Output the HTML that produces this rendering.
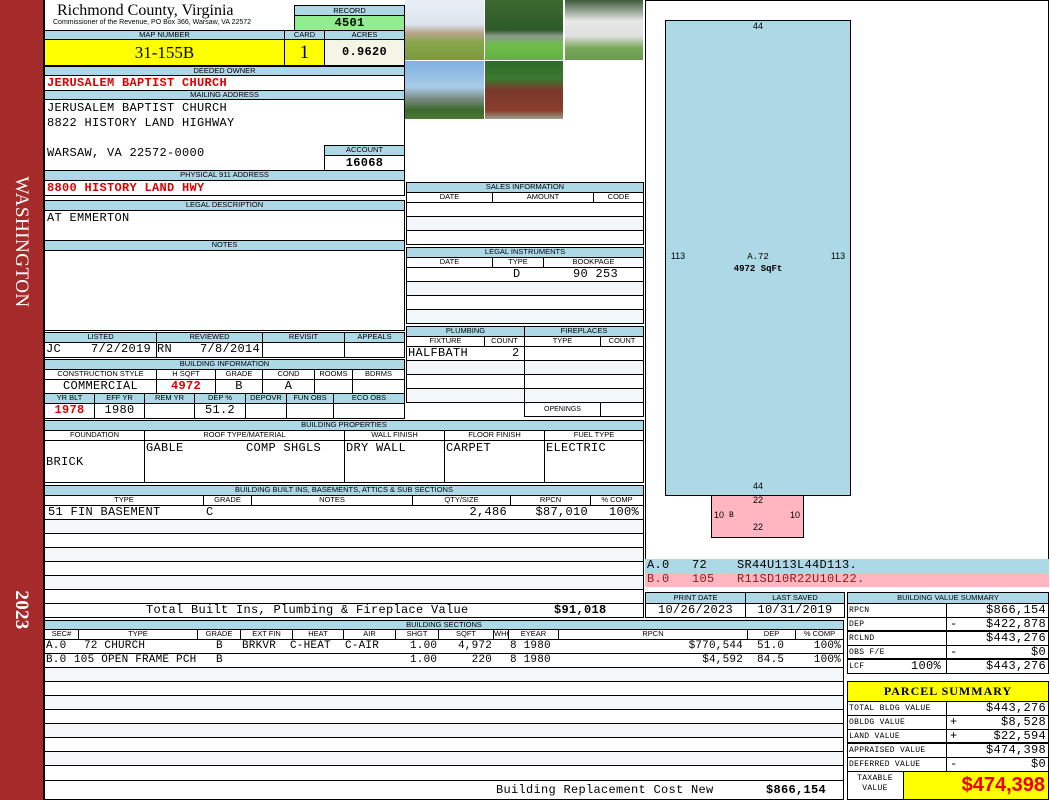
<!DOCTYPE html>
<html><head><meta charset="utf-8"><style>
*{box-sizing:border-box;margin:0;padding:0}
body{width:1050px;height:800px;position:relative;background:#fff;overflow:hidden;font-family:"Liberation Mono",monospace;font-size:12px;letter-spacing:0.3px;color:#000}
div{position:absolute}
.h{background:#add8e6;border:1px solid #000;font-family:"Liberation Sans",sans-serif;font-size:7.5px;letter-spacing:0;text-align:center;line-height:8px;white-space:nowrap;overflow:hidden}
.b{border:1px solid #000}
.t{white-space:pre;line-height:13px}
.r{color:#d00;font-weight:bold}
.c{text-align:center}
.rt{text-align:right}
.s{font-family:"Liberation Sans",sans-serif;font-size:7px;letter-spacing:0;line-height:9px;text-align:center;white-space:nowrap}
.bl{background:#add8e6}
.q{font-size:11px;letter-spacing:0.2px}
</style></head><body>
<div style="left:0;top:0;width:43px;height:800px;background:#a52a2a"></div>
<div style="left:21px;top:242px;width:0;height:0"><div style="left:-90px;top:-12px;width:180px;height:24px;transform:rotate(90deg);color:#fff;font-family:'Liberation Serif',serif;font-size:19px;text-align:center;line-height:24px;letter-spacing:0.5px">WASHINGTON</div></div>
<div style="left:21px;top:610px;width:0;height:0"><div style="left:-40px;top:-12px;width:80px;height:24px;transform:rotate(90deg);color:#fff;font-family:'Liberation Serif',serif;font-weight:bold;font-size:19px;text-align:center;line-height:24px">2023</div></div>
<div style="left:43px;top:0;width:2px;height:800px;background:#000"></div>

<div class="t" style="left:57px;top:2px;font-family:'Liberation Serif',serif;font-size:16px;letter-spacing:0;line-height:18px">Richmond County, Virginia</div>
<div class="t" style="left:53px;top:19px;font-family:'Liberation Sans',sans-serif;font-size:7px;letter-spacing:0;line-height:8px">Commissioner of the Revenue, PO Box 366, Warsaw, VA 22572</div>
<div class="h" style="left:294px;top:5px;width:111px;height:11px;line-height:9px">RECORD</div>
<div class="b c" style="left:294px;top:15px;width:111px;height:16px;background:#90ee90;font-weight:bold;line-height:14px">4501</div>
<div class="h" style="left:44px;top:30px;width:241px;height:10px">MAP NUMBER</div>
<div class="h" style="left:284px;top:30px;width:41px;height:10px">CARD</div>
<div class="h" style="left:324px;top:30px;width:81px;height:10px">ACRES</div>
<div class="b c" style="left:44px;top:39px;width:241px;height:27px;background:#ff0;font-family:'Liberation Serif',serif;font-size:17px;letter-spacing:0;line-height:25px">31-155B</div>
<div class="b c" style="left:284px;top:39px;width:41px;height:27px;background:#ff0;font-family:'Liberation Serif',serif;font-size:19px;line-height:25px">1</div>
<div class="b c" style="left:324px;top:39px;width:81px;height:27px;background:#f5f5e6;font-weight:bold;line-height:25px">0.9620</div>
<div class="h" style="left:44px;top:66px;width:361px;height:10px">DEEDED OWNER</div>
<div class="b t r" style="left:44px;top:75px;width:361px;height:16px;padding-left:2px;line-height:15px">JERUSALEM BAPTIST CHURCH</div>
<div class="h" style="left:44px;top:90px;width:361px;height:10px">MAILING ADDRESS</div>
<div class="b" style="left:44px;top:99px;width:361px;height:72px"></div>
<div class="t" style="left:47px;top:102px">JERUSALEM BAPTIST CHURCH</div>
<div class="t" style="left:47px;top:117px">8822 HISTORY LAND HIGHWAY</div>
<div class="t" style="left:47px;top:147px">WARSAW, VA 22572-0000</div>
<div class="h" style="left:324px;top:145px;width:81px;height:11px">ACCOUNT</div>
<div class="b c" style="left:324px;top:155px;width:81px;height:16px;font-weight:bold;line-height:14px">16068</div>
<div class="h" style="left:44px;top:170px;width:361px;height:11px">PHYSICAL 911 ADDRESS</div>
<div class="b t r" style="left:44px;top:180px;width:361px;height:16px;padding-left:2px;line-height:15px">8800 HISTORY LAND HWY</div>
<div class="h" style="left:44px;top:200px;width:361px;height:11px">LEGAL DESCRIPTION</div>
<div class="b" style="left:44px;top:210px;width:361px;height:31px"></div>
<div class="t" style="left:47px;top:212px">AT EMMERTON</div>
<div class="h" style="left:44px;top:240px;width:361px;height:11px">NOTES</div>
<div class="b" style="left:44px;top:250px;width:361px;height:81px"></div>

<div class="h" style="left:44px;top:332px;width:113px;height:11px">LISTED</div>
<div class="h" style="left:156px;top:332px;width:107px;height:11px">REVIEWED</div>
<div class="h" style="left:262px;top:332px;width:83px;height:11px">REVISIT</div>
<div class="h" style="left:344px;top:332px;width:61px;height:11px">APPEALS</div>
<div class="b" style="left:44px;top:342px;width:113px;height:16px"></div>
<div class="b" style="left:156px;top:342px;width:107px;height:16px"></div>
<div class="b" style="left:262px;top:342px;width:83px;height:16px"></div>
<div class="b" style="left:344px;top:342px;width:61px;height:16px"></div>
<div class="t" style="left:46px;top:343px">JC</div><div class="t" style="left:91px;top:343px">7/2/2019</div>
<div class="t" style="left:157px;top:343px">RN</div><div class="t" style="left:200px;top:343px">7/8/2014</div>

<div class="h" style="left:44px;top:359px;width:361px;height:11px">BUILDING INFORMATION</div>
<div class="h" style="left:44px;top:369px;width:113px;height:11px;background:#fff">CONSTRUCTION STYLE</div>
<div class="h" style="left:156px;top:369px;width:60px;height:11px;background:#fff">H SQFT</div>
<div class="h" style="left:215px;top:369px;width:48px;height:11px;background:#fff">GRADE</div>
<div class="h" style="left:262px;top:369px;width:53px;height:11px;background:#fff">COND</div>
<div class="h" style="left:314px;top:369px;width:39px;height:11px;background:#fff">ROOMS</div>
<div class="h" style="left:352px;top:369px;width:53px;height:11px;background:#fff">BDRMS</div>
<div class="b t c" style="left:44px;top:379px;width:113px;height:15px">COMMERCIAL</div>
<div class="b t c r" style="left:156px;top:379px;width:60px;height:15px">4972</div>
<div class="b t c" style="left:215px;top:379px;width:48px;height:15px">B</div>
<div class="b t c" style="left:262px;top:379px;width:53px;height:15px">A</div>
<div class="b" style="left:314px;top:379px;width:39px;height:15px"></div>
<div class="b" style="left:352px;top:379px;width:53px;height:15px"></div>
<div class="h" style="left:44px;top:393px;width:51px;height:11px">YR BLT</div>
<div class="h" style="left:94px;top:393px;width:51px;height:11px">EFF YR</div>
<div class="h" style="left:144px;top:393px;width:51px;height:11px">REM YR</div>
<div class="h" style="left:194px;top:393px;width:52px;height:11px">DEP %</div>
<div class="h" style="left:245px;top:393px;width:42px;height:11px">DEPOVR</div>
<div class="h" style="left:286px;top:393px;width:48px;height:11px">FUN OBS</div>
<div class="h" style="left:333px;top:393px;width:72px;height:11px">ECO OBS</div>
<div class="b t c r" style="left:44px;top:403px;width:51px;height:16px">1978</div>
<div class="b t c" style="left:94px;top:403px;width:51px;height:16px">1980</div>
<div class="b" style="left:144px;top:403px;width:51px;height:16px"></div>
<div class="b t c" style="left:194px;top:403px;width:52px;height:16px">51.2</div>
<div class="b" style="left:245px;top:403px;width:42px;height:16px"></div>
<div class="b" style="left:286px;top:403px;width:48px;height:16px"></div>
<div class="b" style="left:333px;top:403px;width:72px;height:16px"></div>

<div style="left:405px;top:0;width:79px;height:60px;background:linear-gradient(#e8eef4 0,#dde6ee 40%,#b9a48c 55%,#8aa64e 70%,#7a9a3e 100%)"></div>
<div style="left:485px;top:0;width:78px;height:60px;background:linear-gradient(#3c6a30 0,#2f5a2a 50%,#8a9a8c 60%,#6fbf4a 75%,#63b044 100%)"></div>
<div style="left:565px;top:0;width:78px;height:60px;background:linear-gradient(#3c5a38 0,#e8e8e8 35%,#e0e0e0 60%,#7aa85a 80%,#6a9a50 100%)"></div>
<div style="left:405px;top:61px;width:79px;height:58px;background:linear-gradient(#7fb0e0 0,#a8cbe8 45%,#7c8c84 65%,#3c6a2c 85%,#4a7a34 100%)"></div>
<div style="left:485px;top:61px;width:78px;height:58px;background:linear-gradient(#2e6a2a 0,#3a7a30 30%,#7a3a2c 50%,#8a3c2a 85%,#9aa090 100%)"></div>

<div class="h" style="left:406px;top:182px;width:238px;height:11px">SALES INFORMATION</div>
<div class="h" style="left:406px;top:192px;width:87px;height:11px;background:#fff">DATE</div>
<div class="h" style="left:492px;top:192px;width:102px;height:11px;background:#fff">AMOUNT</div>
<div class="h" style="left:593px;top:192px;width:51px;height:11px;background:#fff">CODE</div>
<div class="b" style="left:406px;top:202px;width:238px;height:15px"></div>
<div class="b" style="left:406px;top:216px;width:238px;height:15px;background:#f4f7fa"></div>
<div class="b" style="left:406px;top:230px;width:238px;height:15px"></div>
<div class="h" style="left:406px;top:247px;width:238px;height:11px">LEGAL INSTRUMENTS</div>
<div class="h" style="left:406px;top:257px;width:87px;height:11px;background:#fff">DATE</div>
<div class="h" style="left:492px;top:257px;width:52px;height:11px;background:#fff">TYPE</div>
<div class="h" style="left:543px;top:257px;width:101px;height:11px;background:#fff">BOOKPAGE</div>
<div class="b" style="left:406px;top:267px;width:238px;height:15px"></div>
<div class="t" style="left:513px;top:268px">D</div><div class="t" style="left:573px;top:268px">90 253</div>
<div class="b" style="left:406px;top:281px;width:238px;height:15px;background:#f4f7fa"></div>
<div class="b" style="left:406px;top:295px;width:238px;height:15px"></div>
<div class="b" style="left:406px;top:309px;width:238px;height:15px;background:#f4f7fa"></div>

<div class="h" style="left:406px;top:326px;width:119px;height:11px">PLUMBING</div>
<div class="h" style="left:524px;top:326px;width:120px;height:11px">FIREPLACES</div>
<div class="h" style="left:406px;top:336px;width:79px;height:11px;background:#fff">FIXTURE</div>
<div class="h" style="left:484px;top:336px;width:41px;height:11px;background:#fff">COUNT</div>
<div class="h" style="left:524px;top:336px;width:77px;height:11px;background:#fff">TYPE</div>
<div class="h" style="left:600px;top:336px;width:44px;height:11px;background:#fff">COUNT</div>
<div class="b" style="left:406px;top:346px;width:119px;height:15px"></div>
<div class="t" style="left:408px;top:347px">HALFBATH</div><div class="t" style="left:512px;top:347px">2</div>
<div class="b" style="left:406px;top:360px;width:119px;height:15px;background:#f4f7fa"></div>
<div class="b" style="left:406px;top:374px;width:119px;height:15px"></div>
<div class="b" style="left:406px;top:388px;width:119px;height:15px;background:#f4f7fa"></div>
<div class="b" style="left:524px;top:346px;width:120px;height:15px"></div>
<div class="b" style="left:524px;top:360px;width:120px;height:15px;background:#f4f7fa"></div>
<div class="b" style="left:524px;top:374px;width:120px;height:15px"></div>
<div class="b" style="left:524px;top:388px;width:120px;height:15px;background:#f4f7fa"></div>
<div class="b s" style="left:524px;top:402px;width:77px;height:15px;line-height:13px">OPENINGS</div>
<div class="b" style="left:600px;top:402px;width:44px;height:15px"></div>

<div class="h" style="left:44px;top:420px;width:600px;height:11px">BUILDING PROPERTIES</div>
<div class="h" style="left:44px;top:430px;width:101px;height:11px;background:#fff">FOUNDATION</div>
<div class="h" style="left:144px;top:430px;width:201px;height:11px;background:#fff">ROOF TYPE/MATERIAL</div>
<div class="h" style="left:344px;top:430px;width:101px;height:11px;background:#fff">WALL FINISH</div>
<div class="h" style="left:444px;top:430px;width:101px;height:11px;background:#fff">FLOOR FINISH</div>
<div class="h" style="left:544px;top:430px;width:100px;height:11px;background:#fff">FUEL TYPE</div>
<div class="b" style="left:44px;top:440px;width:101px;height:43px"></div>
<div class="b" style="left:144px;top:440px;width:201px;height:43px"></div>
<div class="b" style="left:344px;top:440px;width:101px;height:43px"></div>
<div class="b" style="left:444px;top:440px;width:101px;height:43px"></div>
<div class="b" style="left:544px;top:440px;width:100px;height:43px"></div>
<div class="t" style="left:46px;top:456px">BRICK</div>
<div class="t" style="left:146px;top:442px">GABLE</div><div class="t" style="left:246px;top:442px">COMP SHGLS</div>
<div class="t" style="left:346px;top:442px">DRY WALL</div>
<div class="t" style="left:446px;top:442px">CARPET</div>
<div class="t" style="left:546px;top:442px">ELECTRIC</div>

<div class="h" style="left:44px;top:485px;width:600px;height:11px">BUILDING BUILT INS, BASEMENTS, ATTICS &amp; SUB SECTIONS</div>
<div class="h" style="left:44px;top:495px;width:160px;height:11px;background:#fff">TYPE</div>
<div class="h" style="left:203px;top:495px;width:49px;height:11px;background:#fff">GRADE</div>
<div class="h" style="left:251px;top:495px;width:162px;height:11px;background:#fff">NOTES</div>
<div class="h" style="left:412px;top:495px;width:99px;height:11px;background:#fff">QTY/SIZE</div>
<div class="h" style="left:510px;top:495px;width:81px;height:11px;background:#fff">RPCN</div>
<div class="h" style="left:590px;top:495px;width:54px;height:11px;background:#fff">% COMP</div>
<div class="b" style="left:44px;top:505px;width:600px;height:15px"></div>
<div class="t" style="left:48px;top:506px">51 FIN BASEMENT</div><div class="t" style="left:206px;top:506px">C</div>
<div class="t rt" style="left:412px;top:506px;width:95px">2,486</div>
<div class="t rt" style="left:510px;top:506px;width:78px">$87,010</div>
<div class="t rt" style="left:590px;top:506px;width:49px">100%</div>
<div class="b" style="left:44px;top:519px;width:600px;height:15px;background:#f4f7fa"></div>
<div class="b" style="left:44px;top:533px;width:600px;height:15px"></div>
<div class="b" style="left:44px;top:547px;width:600px;height:15px;background:#f4f7fa"></div>
<div class="b" style="left:44px;top:561px;width:600px;height:15px"></div>
<div class="b" style="left:44px;top:575px;width:600px;height:15px;background:#f4f7fa"></div>
<div class="b" style="left:44px;top:589px;width:600px;height:15px"></div>
<div class="b" style="left:44px;top:603px;width:600px;height:15px"></div>
<div class="t" style="left:146px;top:604px">Total Built Ins, Plumbing &amp; Fireplace Value</div>
<div class="t" style="left:554px;top:604px;font-weight:bold">$91,018</div>

<div class="h" style="left:44px;top:620px;width:800px;height:10px">BUILDING SECTIONS</div>
<div class="h" style="left:44px;top:629px;width:35px;height:11px;background:#fff">SEC#</div>
<div class="h" style="left:78px;top:629px;width:120px;height:11px;background:#fff">TYPE</div>
<div class="h" style="left:197px;top:629px;width:44px;height:11px;background:#fff">GRADE</div>
<div class="h" style="left:240px;top:629px;width:53px;height:11px;background:#fff">EXT FIN</div>
<div class="h" style="left:292px;top:629px;width:52px;height:11px;background:#fff">HEAT</div>
<div class="h" style="left:343px;top:629px;width:53px;height:11px;background:#fff">AIR</div>
<div class="h" style="left:395px;top:629px;width:44px;height:11px;background:#fff">SHGT</div>
<div class="h" style="left:438px;top:629px;width:56px;height:11px;background:#fff">SQFT</div>
<div class="h" style="left:493px;top:629px;width:16px;height:11px;background:#fff">WHGT</div>
<div class="h" style="left:508px;top:629px;width:51px;height:11px;background:#fff">EYEAR</div>
<div class="h" style="left:558px;top:629px;width:190px;height:11px;background:#fff">RPCN</div>
<div class="h" style="left:747px;top:629px;width:49px;height:11px;background:#fff">DEP</div>
<div class="h" style="left:795px;top:629px;width:49px;height:11px;background:#fff">% COMP</div>
<div class="b" style="left:44px;top:639px;width:800px;height:15px"></div>
<div class="b" style="left:44px;top:653px;width:800px;height:15px"></div>
<div class="t q" style="left:46px;top:640px">A.0</div><div class="t q" style="left:84px;top:640px">72 CHURCH</div><div class="t q" style="left:216px;top:640px">B</div><div class="t q" style="left:242px;top:640px">BRKVR</div><div class="t q" style="left:290px;top:640px">C-HEAT</div><div class="t q" style="left:345px;top:640px">C-AIR</div><div class="t q" style="left:410px;top:640px">1.00</div><div class="t q rt" style="left:440px;top:640px;width:52px">4,972</div><div class="t q" style="left:510px;top:640px">8 1980</div><div class="t q rt" style="left:640px;top:640px;width:103px">$770,544</div><div class="t q" style="left:757px;top:640px">51.0</div><div class="t q rt" style="left:795px;top:640px;width:46px">100%</div>
<div class="t q" style="left:46px;top:654px">B.0</div><div class="t q" style="left:74px;top:654px">105 OPEN FRAME PCH</div><div class="t q" style="left:216px;top:654px">B</div><div class="t q" style="left:410px;top:654px">1.00</div><div class="t q rt" style="left:440px;top:654px;width:52px">220</div><div class="t q" style="left:510px;top:654px">8 1980</div><div class="t q rt" style="left:640px;top:654px;width:103px">$4,592</div><div class="t q" style="left:757px;top:654px">84.5</div><div class="t q rt" style="left:795px;top:654px;width:46px">100%</div>
<div class="b" style="left:44px;top:667px;width:800px;height:15px;background:#f4f7fa"></div>
<div class="b" style="left:44px;top:681px;width:800px;height:15px"></div>
<div class="b" style="left:44px;top:695px;width:800px;height:15px;background:#f4f7fa"></div>
<div class="b" style="left:44px;top:709px;width:800px;height:15px"></div>
<div class="b" style="left:44px;top:723px;width:800px;height:15px;background:#f4f7fa"></div>
<div class="b" style="left:44px;top:737px;width:800px;height:15px"></div>
<div class="b" style="left:44px;top:751px;width:800px;height:15px;background:#f4f7fa"></div>
<div class="b" style="left:44px;top:765px;width:800px;height:16px"></div>
<div class="b" style="left:44px;top:780px;width:800px;height:20px"></div>
<div class="t" style="left:496px;top:784px">Building Replacement Cost New</div>
<div class="t" style="left:766px;top:784px;font-weight:bold">$866,154</div>

<div class="b" style="left:645px;top:0;width:404px;height:560px"></div>
<div class="b bl" style="left:665px;top:20px;width:186px;height:476px"></div>
<div class="s" style="left:740px;top:22px;width:36px;font-size:9px">44</div>
<div class="s" style="left:740px;top:482px;width:36px;font-size:9px">44</div>
<div class="s" style="left:660px;top:252px;width:36px;font-size:9px">113</div>
<div class="s" style="left:820px;top:252px;width:36px;font-size:9px">113</div>
<div class="t c" style="left:700px;top:251px;width:116px;font-size:9px;line-height:12px;letter-spacing:0">A.72
<b>4972 SqFt</b></div>
<div class="b" style="left:711px;top:495px;width:93px;height:43px;background:#ffb6c1"></div>
<div class="s" style="left:740px;top:495px;width:36px;font-size:9px;line-height:11px">22</div>
<div class="s" style="left:740px;top:522px;width:36px;font-size:9px;line-height:11px">22</div>
<div class="s" style="left:712px;top:510px;width:14px;font-size:9px;line-height:11px">10</div>
<div class="s" style="left:788px;top:510px;width:14px;font-size:9px;line-height:11px">10</div>
<div class="t" style="left:729px;top:509px;font-size:8px">B</div>
<div class="t" style="left:645px;top:559px;width:404px;height:14px;background:#add8e6;padding-left:2px">A.0   72    SR44U113L44D113.</div>
<div class="t" style="left:645px;top:573px;width:404px;height:14px;background:#ffb6c1;padding-left:2px;color:#8b1a1a">B.0   105   R11SD10R22U10L22.</div>

<div class="h" style="left:645px;top:592px;width:101px;height:12px;line-height:10px">PRINT DATE</div>
<div class="h" style="left:745px;top:592px;width:100px;height:12px;line-height:10px">LAST SAVED</div>
<div class="b t c" style="left:645px;top:603px;width:101px;height:15px">10/26/2023</div>
<div class="b t c" style="left:745px;top:603px;width:100px;height:15px">10/31/2019</div>

<div class="h" style="left:847px;top:592px;width:202px;height:12px;line-height:10px">BUILDING VALUE SUMMARY</div>
<div class="b" style="left:847px;top:603px;width:202px;height:71px"></div>
<div style="left:946px;top:603px;width:1px;height:71px;background:#000"></div>
<div style="left:847px;top:617px;width:202px;height:1px;background:#000"></div>
<div style="left:847px;top:630px;width:202px;height:2px;background:#000"></div>
<div style="left:847px;top:645px;width:202px;height:1px;background:#000"></div>
<div style="left:847px;top:658px;width:202px;height:2px;background:#000"></div>
<div class="t" style="left:849px;top:604px;font-size:8px">RPCN</div><div class="t rt" style="left:950px;top:604px;width:96px">$866,154</div>
<div class="t" style="left:849px;top:618px;font-size:8px">DEP</div><div class="t" style="left:950px;top:618px">-</div><div class="t rt" style="left:950px;top:618px;width:96px">$422,878</div>
<div class="t" style="left:849px;top:632px;font-size:8px">RCLND</div><div class="t rt" style="left:950px;top:632px;width:96px">$443,276</div>
<div class="t" style="left:849px;top:646px;font-size:8px">OBS F/E</div><div class="t" style="left:950px;top:646px">-</div><div class="t rt" style="left:950px;top:646px;width:96px">$0</div>
<div class="t" style="left:849px;top:660px;font-size:8px">LCF</div><div class="t" style="left:911px;top:660px">100%</div><div class="t rt" style="left:950px;top:660px;width:96px">$443,276</div>

<div class="b c" style="left:847px;top:681px;width:202px;height:21px;background:#ff0;font-family:'Liberation Serif',serif;font-weight:bold;font-size:12px;line-height:19px;letter-spacing:1px">PARCEL SUMMARY</div>
<div class="b" style="left:847px;top:701px;width:202px;height:99px"></div>
<div style="left:946px;top:701px;width:1px;height:71px;background:#000"></div>
<div style="left:847px;top:715px;width:202px;height:1px;background:#000"></div>
<div style="left:847px;top:729px;width:202px;height:1px;background:#000"></div>
<div style="left:847px;top:742px;width:202px;height:2px;background:#000"></div>
<div style="left:847px;top:757px;width:202px;height:1px;background:#000"></div>
<div style="left:847px;top:771px;width:202px;height:1px;background:#000"></div>
<div class="t" style="left:849px;top:702px;font-size:8px">TOTAL BLDG VALUE</div><div class="t rt" style="left:950px;top:702px;width:96px">$443,276</div>
<div class="t" style="left:849px;top:716px;font-size:8px">OBLDG VALUE</div><div class="t" style="left:950px;top:716px">+</div><div class="t rt" style="left:950px;top:716px;width:96px">$8,528</div>
<div class="t" style="left:849px;top:730px;font-size:8px">LAND VALUE</div><div class="t" style="left:950px;top:730px">+</div><div class="t rt" style="left:950px;top:730px;width:96px">$22,594</div>
<div class="t" style="left:849px;top:744px;font-size:8px">APPRAISED VALUE</div><div class="t rt" style="left:950px;top:744px;width:96px">$474,398</div>
<div class="t" style="left:849px;top:758px;font-size:8px">DEFERRED VALUE</div><div class="t" style="left:950px;top:758px">-</div><div class="t rt" style="left:950px;top:758px;width:96px">$0</div>
<div class="t c" style="left:847px;top:774px;width:56px;font-size:8px;line-height:10px">TAXABLE
VALUE</div>
<div class="b" style="left:903px;top:771px;width:146px;height:29px;background:#ff0;color:#e00;font-family:'Liberation Sans',sans-serif;font-weight:bold;font-size:20px;letter-spacing:0;text-align:right;padding-right:3px;line-height:27px">$474,398</div>
</body></html>
